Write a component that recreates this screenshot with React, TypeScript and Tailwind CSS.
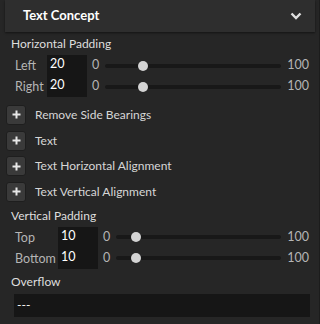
import React from "react";

const font = { fontFamily: 'Lato, "Open Sans", sans-serif' };

function SliderRow({ label, value, pct, wide }: { label: string; value: number; pct: number; wide?: boolean }) {
  return (
    <div className="flex items-center h-[21px]">
      <div className={`${wide ? "w-[47px]" : "w-[36px]"} pl-[4px] pt-[2px] text-[12.5px] text-[#b5b5b5] shrink-0`}>
        {label}
      </div>
      <div className="w-[40px] h-[21px] bg-[#161616] text-white text-[12.5px] pl-[3px] leading-[18px] shrink-0">{value}</div>
      <div className="flex-1 flex items-center ml-[5px] mr-[11px] gap-[6px]">
        <span className="text-[12.5px] text-[#b5b5b5]">0</span>
        <div className="relative flex-1 h-[4px] rounded-full bg-[#181818]">
          <div
            className="absolute top-1/2 w-[10px] h-[10px] -mt-[5px] -ml-[5px] rounded-full bg-[#d4d4d4]"
            style={{ left: `${pct}%` }}
          />
        </div>
        <span className="text-[12.5px] text-[#b5b5b5]">100</span>
      </div>
    </div>
  );
}

function AddRow({ label }: { label: string }) {
  return (
    <div className="flex items-center h-[25.7px] pl-[6px]">
      <div className="w-[20px] h-[20px] rounded-[3px] bg-[#3a3a3a] border border-[#1e1e1e] flex items-center justify-center shrink-0">
        <svg width="9" height="9" viewBox="0 0 9 9">
          <path d="M4.5 0.5v8M0.5 4.5h8" stroke="#e8e8e8" strokeWidth="2" />
        </svg>
      </div>
      <span className="ml-[9px] text-[12px] text-[#d6d6d6]">{label}</span>
    </div>
  );
}

export default function App() {
  return (
    <div className="w-[320px] h-[324px] bg-[#262626] overflow-hidden relative" style={font}>
      <div className="absolute right-0 top-0 bottom-0 w-[1px] bg-[#1c1c1c]" />
      {/* header */}
      <div className="mx-[5px] h-[32px] bg-[#2e2e2e] flex items-center justify-between pl-[18px] pr-[13px] shadow-[0_1px_2px_rgba(0,0,0,0.5)]">
        <span className="text-[13px] font-bold text-white">Text Concept</span>
        <svg width="12" height="8" viewBox="0 0 12 8">
          <path d="M1.5 1.5l4.5 4.5 4.5-4.5" stroke="#e0e0e0" strokeWidth="2.4" fill="none" />
        </svg>
      </div>

      <div className="pl-[11px] mt-[2px] text-[12px] text-[#dedede] h-[20px] leading-[20px]">Horizontal Padding</div>
      <div className="pl-[11px] mt-[1px]">
        <SliderRow label="Left" value={20} pct={21.5} />
        <SliderRow label="Right" value={20} pct={21.5} />
      </div>

      <div className="mt-[5px]">
        <AddRow label="Remove Side Bearings" />
        <AddRow label="Text" />
        <AddRow label="Text Horizontal Alignment" />
        <AddRow label="Text Vertical Alignment" />
      </div>

      <div className="pl-[11px] mt-[1px] text-[12px] text-[#dedede] h-[20px] leading-[20px]">Vertical Padding</div>
      <div className="pl-[11px] mt-[1px]">
        <SliderRow label="Top" value={10} pct={11.8} wide />
        <SliderRow label="Bottom" value={10} pct={11.8} wide />
      </div>

      <div className="pl-[11px] mt-[3px] text-[12px] text-[#dedede] h-[20px] leading-[20px]">Overflow</div>
      <div className="ml-[14px] mr-[10px] mt-[2px] h-[23px] bg-[#161616] text-[12px] text-white pl-[3px] leading-[22px]">---</div>
    </div>
  );
}
